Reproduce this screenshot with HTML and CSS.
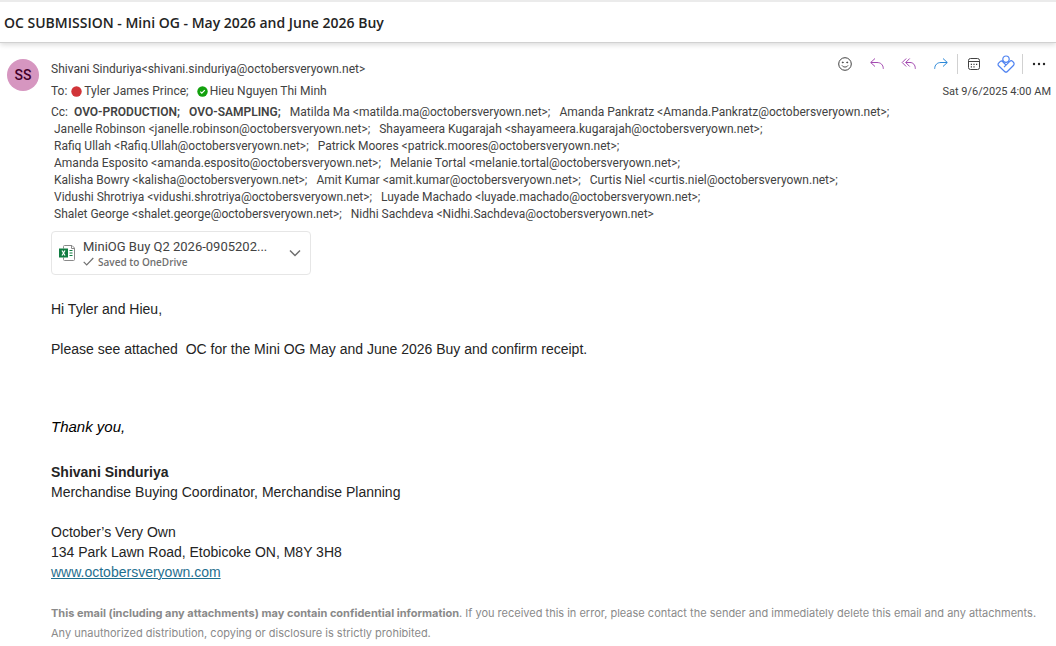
FILE: index.html
```html
<!DOCTYPE html>
<html lang="en">
    <head>
        <meta charset="UTF-8" />
        <meta name="viewport" content="width=device-width, initial-scale=1.0" />
        <title>OC SUBMISSION - Mini OG - May 2026 and June 2026 Buy</title>
        <link rel="stylesheet" href="styles.css">
    </head>
    <body>
        <!-- subject bar -->
        <header class="subject">
            <h1>OC SUBMISSION - Mini OG - May 2026 and June 2026 Buy</h1>
        </header>

        <main class="mail">
            <div class="avatar">SS</div>

            <div class="mail-main">
                <div class="mail-head">
                    <div class="people">
                        <p class="from">Shivani Sinduriya&lt;shivani.sinduriya@octobersveryown.net&gt;</p>
                        <p class="to">
                            <span>To:</span>
                            <span class="person">
                                <svg class="presence" viewBox="0 0 11 11"><circle cx="5.5" cy="5.5" r="5.2" fill="#d13438" /></svg>
                                Tyler James Prince;
                            </span>
                            <span class="person">
                                <svg class="presence" viewBox="0 0 11 11"><circle cx="5.5" cy="5.5" r="5.2" fill="#13a10e" /><path d="M3.3 5.7l1.5 1.5 3-3" fill="none" stroke="#fff" stroke-width="1.2" /></svg>
                                Hieu Nguyen Thi Minh
                            </span>
                        </p>
                    </div>

                    <div class="tools">
                        <div class="toolbar">
                            <button type="button" aria-label="React">
                                <svg viewBox="0 0 16 16" stroke="#424242"><circle cx="8" cy="8" r="6.3" /><path d="M5 9.5c1.4 2 4.6 2 6 0" /><circle cx="5.8" cy="6.4" r=".5" fill="#424242" /><circle cx="10.2" cy="6.4" r=".5" fill="#424242" /></svg>
                            </button>
                            <button type="button" aria-label="Reply">
                                <svg viewBox="0 0 16 16" stroke="#a349b0"><path d="M6 2.5L1.7 6.5L6 10.5M1.9 6.5H8c3.8 0 6.3 2.4 6.3 6.3" /></svg>
                            </button>
                            <button type="button" aria-label="Reply all">
                                <svg viewBox="0 0 16 16" stroke="#a349b0"><path d="M5.2 2.5L1.2 6.5l4 4M8.7 2.5l-4 4l4 4M4.9 6.5H9c3.2 0 5.3 2.4 5.3 6.3" /></svg>
                            </button>
                            <button type="button" aria-label="Forward">
                                <svg viewBox="0 0 16 16" stroke="#2b88d8"><path d="M10 2.5L14.3 6.5L10 10.5M14.1 6.5H8c-3.8 0-6.3 2.4-6.3 6.3" /></svg>
                            </button>
                            <span class="line"></span>
                            <button type="button" aria-label="Schedule meeting">
                                <svg viewBox="0 0 16 16" stroke="#424242"><rect x="2.5" y="2.5" width="11" height="11" rx="2" /><path d="M2.5 5.5h11" /><path d="M4.8 8.3h1.2M7.4 8.3h1.2M10 8.3h1.2M4.8 10.8h1.2M7.4 10.8h1.2" stroke-width="1.2" /></svg>
                            </button>
                            <button type="button" aria-label="Apps">
                                <svg class="big" viewBox="0 0 18 18" stroke="#4f83f1" stroke-width="1.2"><circle cx="9" cy="4.2" r="3.2" /><path d="M6.2 6L5 5.800a2 2 0 0 0-1.600.600L1.600 8.200a1.800 1.800 0 0 0 0 2.600L7.600 16.500a2 2 0 0 0 2.800 0L16.400 10.500a2.300 2.300 0 0 0 0-3.300l-.8-.8a2 2 0 0 0-2.800 0L7 12.200M5 6l4 4" /></svg>
                            </button>
                            <span class="line"></span>
                            <button type="button" aria-label="More actions">
                                <svg viewBox="0 0 16 16"><g fill="#242424"><circle cx="3" cy="8" r="1.2" /><circle cx="8" cy="8" r="1.2" /><circle cx="13" cy="8" r="1.2" /></g></svg>
                            </button>
                        </div>
                        <time datetime="2025-09-06T04:00">Sat 9/6/2025 4:00 AM</time>
                    </div>
                </div>

                <p class="cc">
                    Cc:
                    <b>OVO-PRODUCTION;</b>
                    <b>OVO-SAMPLING;</b>
                    <span>Matilda Ma &lt;matilda.ma@octobersveryown.net&gt;;</span>
                    <span>Amanda Pankratz &lt;Amanda.Pankratz@octobersveryown.net&gt;;</span>
                    <span>Janelle Robinson &lt;janelle.robinson@octobersveryown.net&gt;;</span>
                    <span>Shayameera Kugarajah &lt;shayameera.kugarajah@octobersveryown.net&gt;;</span>
                    <span>Rafiq Ullah &lt;Rafiq.Ullah@octobersveryown.net&gt;;</span>
                    <span>Patrick Moores &lt;patrick.moores@octobersveryown.net&gt;;</span>
                    <span>Amanda Esposito &lt;amanda.esposito@octobersveryown.net&gt;;</span>
                    <span>Melanie Tortal &lt;melanie.tortal@octobersveryown.net&gt;;</span>
                    <span>Kalisha Bowry &lt;kalisha@octobersveryown.net&gt;;</span>
                    <span>Amit Kumar &lt;amit.kumar@octobersveryown.net&gt;;</span>
                    <span>Curtis Niel &lt;curtis.niel@octobersveryown.net&gt;;</span>
                    <span>Vidushi Shrotriya &lt;vidushi.shrotriya@octobersveryown.net&gt;;</span>
                    <span>Luyade Machado &lt;luyade.machado@octobersveryown.net&gt;;</span>
                    <span>Shalet George &lt;shalet.george@octobersveryown.net&gt;;</span>
                    <span>Nidhi Sachdeva &lt;Nidhi.Sachdeva@octobersveryown.net&gt;</span>
                </p>

                <!-- attachment -->
                <div class="file">
                    <svg class="excel" viewBox="0 0 16 16"><path d="M4.5 3.5v-2a1 1 0 0 1 1-1h7.5l2.5 2.5v11.5a1 1 0 0 1-1 1h-9a1 1 0 0 1-1-1v-2M12.5.5v3h3" fill="#fff" stroke="#8a8a8a" /><path d="M10.5 5.5h3M10.5 8h3M10.5 10.5h3" stroke="#107c41" stroke-width="1.2" /><path d="M0 3.5h9v9H0z" fill="#107c41" /><path d="M3 5.5l3 5M6 5.5l-3 5" stroke="#fff" stroke-width="1.2" /></svg>
                    <div class="file-text">
                        <span class="file-name">MiniOG Buy Q2 2026-0905202...</span>
                        <span class="file-saved">
                            <svg viewBox="0 0 11 9"><path d="M.7 4.8L3.7 7.8L10.3 1" fill="none" stroke="#707070" stroke-width="1.2" /></svg>
                            Saved to OneDrive
                        </span>
                    </div>
                    <button type="button" aria-label="More options">
                        <svg viewBox="0 0 12 8"><path d="M1 1.5l5 5l5-5" fill="none" stroke="#707070" stroke-width="1.5" /></svg>
                    </button>
                </div>

                <!-- message -->
                <article class="message">
                    <p>Hi Tyler and Hieu,</p>
                    <p class="ask">Please see attached&nbsp; OC for the Mini OG May and June 2026 Buy and confirm receipt.</p>
                    <p class="thanks">Thank you,</p>
                    <address>
                        <strong>Shivani Sinduriya</strong>
                        <span class="role">Merchandise Buying Coordinator, Merchandise Planning</span>
                        <span>October’s Very Own</span>
                        <span>134 Park Lawn Road, Etobicoke ON, M8Y 3H8</span>
                        <a href="#">www.octobersveryown.com</a>
                    </address>
                    <p class="notice"><b>This email (including any attachments) may contain confidential information</b>. If you received this in error, please contact the sender and immediately delete this email and any attachments. Any unauthorized distribution, copying or disclosure is strictly prohibited.</p>
                </article>
            </div>
        </main>
    </body>
</html>
```

FILE: styles.css
```css
* {
    box-sizing: border-box;
}
body {
    margin: 0;
    color: #424242;
    background: #fff;
    font: 12px/17px "Segoe UI", Roboto, sans-serif;
}
h1,
p {
    margin: 0;
}
button {
    display: flex;
    padding: 0;
    border: 0;
    background: none;
}

/* subject bar */
.subject {
    padding: 11px 4px 9px;
    border-top: 2px solid #ebebeb;
    border-bottom: 1px solid #d1d1d1;
    box-shadow: 0 2px 5px #ddd;
}
.subject h1 {
    color: #242424;
    font-family: "Segoe UI", "Open Sans", sans-serif;
    font-size: 14px;
    line-height: 20px;
    font-weight: 600;
}

.mail {
    display: flex;
    align-items: flex-start;
    gap: 12px;
    margin-top: 7px;
    padding: 9px 5px 0 7px;
    background: #fff;
}
.avatar {
    flex: none;
    width: 32px;
    height: 32px;
    border-radius: 50%;
    color: #43002a;
    background: #d696c0;
    font-size: 14px;
    line-height: 32px;
    font-weight: 500;
    text-align: center;
}
.mail-main {
    flex: 1;
    min-width: 0;
}

/* sender, recipients and toolbar */
.mail-head {
    display: flex;
    justify-content: space-between;
}
.from {
    margin-top: 2px;
}
.to {
    display: flex;
    align-items: center;
    margin-top: 5px;
}
.person {
    display: flex;
    align-items: center;
    gap: 2px;
    margin-left: 4px;
}
.person + .person {
    margin-left: 8px;
}
.presence {
    width: 11px;
    height: 11px;
}
.tools time {
    display: block;
    margin-top: 9px;
    text-align: right;
    font-size: 11px;
}
.toolbar {
    display: flex;
    align-items: center;
    justify-content: flex-end;
    gap: 8px;
    height: 20px;
    margin-top: -5px;
}
.toolbar button {
    width: 24px;
    height: 20px;
    align-items: center;
    justify-content: center;
}
.toolbar svg {
    width: 16px;
    height: 16px;
    fill: none;
}
.toolbar .big {
    width: 18px;
    height: 18px;
}
.line {
    width: 1px;
    height: 20px;
    margin: 0 -4px;
    background: #d1d1d1;
}
.cc {
    margin-top: 4px;
    padding-right: 130px;
}
.cc b,
.cc span {
    display: inline-block;
    margin: 0 3px;
    white-space: nowrap;
}
.cc b {
    font-weight: 600;
}

/* attachment */
.file {
    display: flex;
    align-items: center;
    gap: 8px;
    width: 260px;
    height: 44px;
    margin-top: 8px;
    padding: 0 9px 0 7px;
    border: 1px solid #e6e6e6;
    border-radius: 4px;
}
.excel {
    width: 16px;
    height: 16px;
}
.file-text {
    flex: 1;
    min-width: 0;
}
.file-name {
    display: block;
    white-space: nowrap;
    font-size: 13px;
}
.file-saved {
    display: flex;
    align-items: center;
    gap: 4px;
    color: #707070;
    font-family: "Segoe UI", "Open Sans", sans-serif;
    font-size: 10px;
    line-height: 14px;
    font-weight: 600;
}
.file-saved svg {
    width: 11px;
    height: 9px;
}
.file button svg {
    width: 12px;
    height: 8px;
}

/* message */
.message {
    margin-top: 24px;
    color: #242424;
    font: 14px/20px Aptos, "Liberation Sans", sans-serif;
}
.ask {
    margin-top: 20px;
}
.thanks {
    margin-top: 58px;
    color: #000;
    font-size: 15px;
    font-style: italic;
}
address {
    display: flex;
    flex-direction: column;
    align-items: flex-start;
    margin-top: 25px;
    font-style: normal;
}
.role {
    margin-bottom: 20px;
}
address a {
    color: #1f6f8f;
}
.notice {
    margin-top: 21px;
    color: #8a8a8a;
    font-family: Aptos, Inter, sans-serif;
    font-size: 11px;
}
```
